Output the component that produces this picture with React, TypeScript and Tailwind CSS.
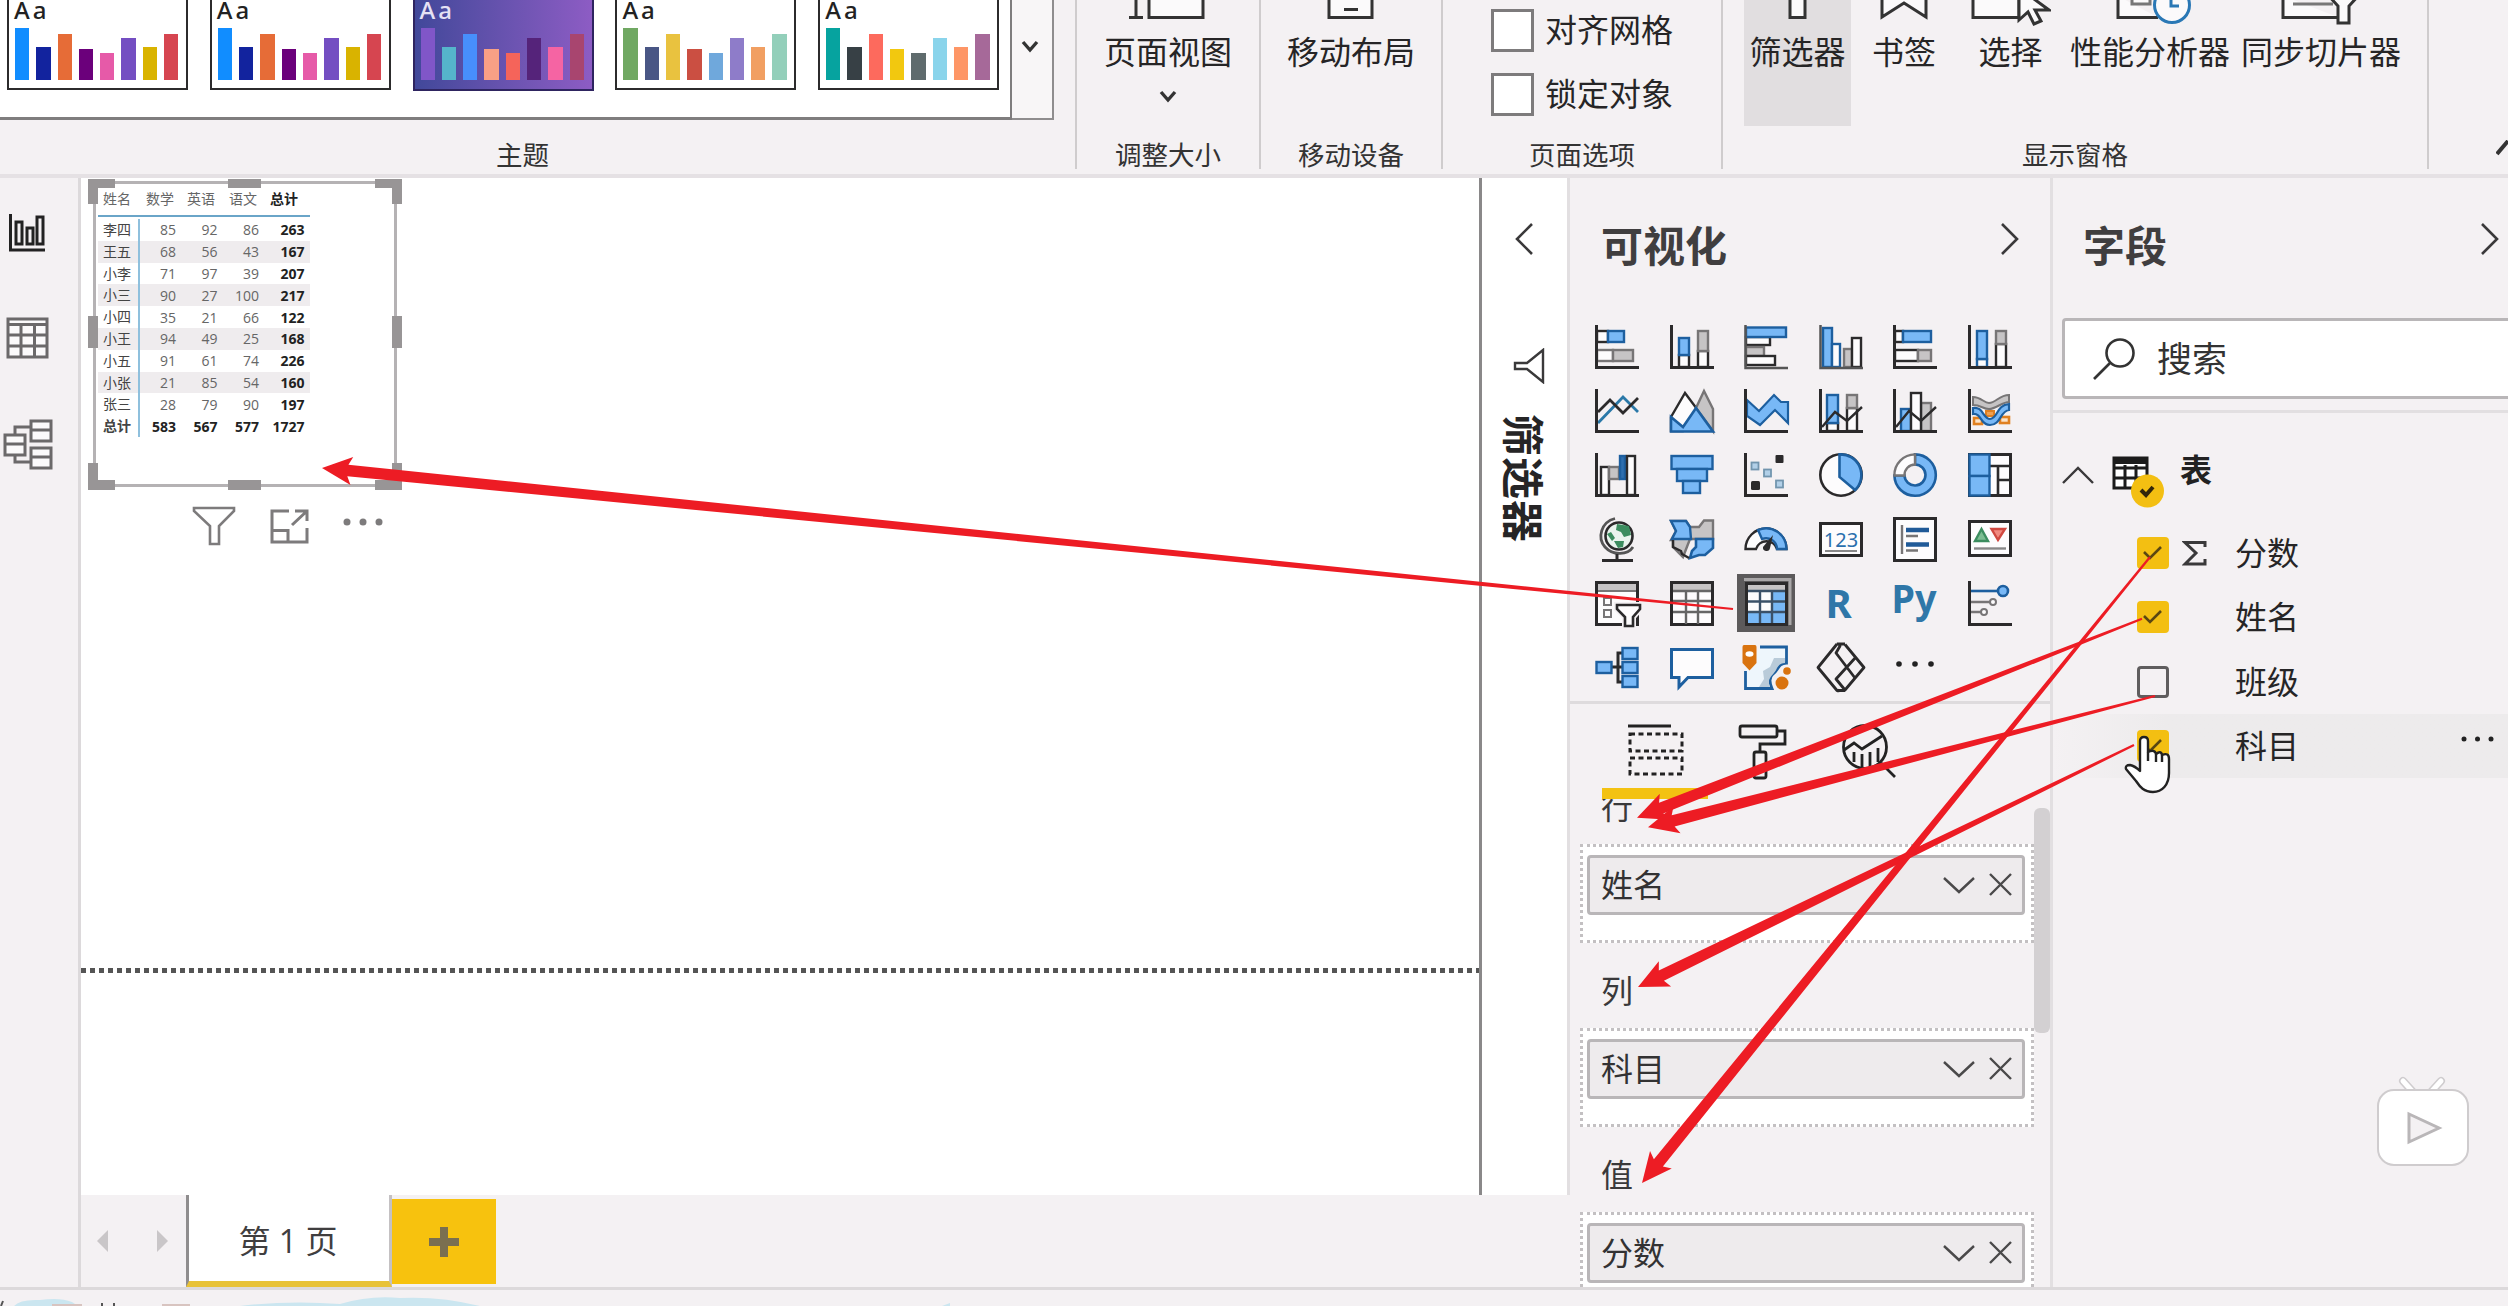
import type { ReactNode } from "react";

const K = "#2b2a2b";
const B = "#78b8f6";
const S = "#1d5f9f";
const G = "#c6c4c5";
const H = "#777576";
const W = "#fdfcfd";

/* ---------- theme gallery ---------- */

const barTops = [28, 47, 34, 49, 53, 38, 47, 34];
const base = ["#118dff", "#12239e", "#e66c37", "#6b007b", "#e65aa8", "#744ec2", "#d9b300", "#d64550"];
const themes = [
  { colors: base, dark: false },
  { colors: base, dark: false },
  { colors: ["#8056c8", "#55b5cb", "#478ffc", "#f8a085", "#f5645a", "#55237a", "#f564a3", "#a8456f"], dark: true },
  { colors: ["#70a862", "#495685", "#e9c23f", "#cb4f42", "#6fa8dc", "#8e7cc9", "#f19f62", "#93cfba"], dark: false },
  { colors: ["#06a39f", "#374045", "#fd6a5d", "#f2c80f", "#5f6b6d", "#8ad4eb", "#fe9666", "#a66999"], dark: false },
];

function Theme({ colors, dark }: { colors: string[]; dark: boolean }) {
  return (
    <div
      className={
        dark
          ? "flex h-[91px] w-[181px] shrink-0 flex-col border-2 border-t-0 border-[#2e2460] bg-gradient-to-r from-[#41489a] to-[#8d5cc4]"
          : "flex h-[90px] w-[181px] shrink-0 flex-col border-2 border-t-0 border-[#2c2b2c] bg-white"
      }
    >
      <div
        className={
          dark
            ? "h-[28px] pl-[5px] font-['Noto_Sans'] text-[24px] leading-[20px] font-medium tracking-[3px] text-[#e6e2f4]"
            : "h-[28px] pl-[5px] font-['Noto_Sans'] text-[24px] leading-[20px] font-medium tracking-[3px] text-[#222]"
        }
      >
        Aa
      </div>
      <div className="flex h-[52px] items-end gap-[7px] pl-[6px]">
        {colors.map((c, i) => (
          <div key={i} className="w-[14.3px]" style={{ height: 80 - barTops[i], background: c }} />
        ))}
      </div>
    </div>
  );
}

/* ---------- ribbon ---------- */

function Group({ width, label, children, className = "" }: { width: string; label: string; children: ReactNode; className?: string }) {
  return (
    <div className={"flex h-[169px] shrink-0 flex-col border-r-2 border-[#cfcccd] " + width}>
      <div className={"flex h-[142px] " + className}>{children}</div>
      <div className="text-center text-[26.5px] leading-[27px] text-[#333]">{label}</div>
    </div>
  );
}

function Tool({ width, label, icon, active = false, arrow = false }: { width: string; label: string; icon: ReactNode; active?: boolean; arrow?: boolean }) {
  return (
    <div className={"flex h-[126px] shrink-0 flex-col items-center " + width + (active ? " bg-[#e1dee0]" : "")}>
      <div className="h-[32px]">{icon}</div>
      <div className="h-[42px] whitespace-nowrap text-[32px] leading-[40px] text-[#262526]">{label}</div>
      {arrow && (
        <svg width="18" height="14" viewBox="0 0 18 14" className="mt-[16px]" fill="none" stroke="#333" strokeWidth="3.4">
          <path d="M2 2l7 8 7-8" />
        </svg>
      )}
    </div>
  );
}

function Check({ label }: { label: string }) {
  return (
    <div className="flex h-[64px] items-center gap-[11px]">
      <div className="h-[43px] w-[43px] border-[3px] border-[#7d7b7c] bg-white" />
      <span className="text-[32px] leading-[40px] text-[#262526]">{label}</span>
    </div>
  );
}

const topIcon = "fill-[#fbfafb] stroke-[#333] [stroke-width:3]";

function Ribbon() {
  return (
    <div className="flex h-[178px] shrink-0 border-b-4 border-[#e5e1e4]">
      <div className="flex h-[169px] w-[1077px] shrink-0 flex-col border-r-2 border-[#cfcccd]">
        <div className="flex h-[142px]">
          <div className="flex h-[120px] w-[1012px] gap-[21.8px] border-r-2 border-b-[3px] border-[#7f7d7e] bg-white pl-[7px]">
            {themes.map((t, i) => (
              <Theme key={i} {...t} />
            ))}
          </div>
          <div className="flex h-[120px] w-[42px] items-center justify-center border-r-2 border-b-2 border-[#8f8d8e] bg-[#f8f6f7] pr-[4px] pb-[24px]">
            <svg width="18" height="14" viewBox="0 0 18 14" fill="none" stroke="#333" strokeWidth="3.4">
              <path d="M2 2l7 8 7-8" />
            </svg>
          </div>
        </div>
        <div className="pr-[30px] text-center text-[26.5px] leading-[27px] text-[#333]">主题</div>
      </div>
      <Group width="w-[184px]" label="调整大小" className="justify-center">
        <Tool
          width="w-[140px]"
          label="页面视图"
          arrow
          icon={
            <svg width="78" height="22" viewBox="0 0 78 22" className={topIcon}>
              <path d="M7-4V17M0 17.5h14M20-4V17.5h54V-4" />
            </svg>
          }
        />
      </Group>
      <Group width="w-[182px]" label="移动设备" className="justify-center">
        <Tool
          width="w-[140px]"
          label="移动布局"
          icon={
            <svg width="48" height="22" viewBox="0 0 48 22" className={topIcon}>
              <path d="M2-4V17.5h43V-4M17 9.500h14" />
            </svg>
          }
        />
      </Group>
      <Group width="w-[280px]" label="页面选项" className="flex-col pl-[48px]">
        <div className="-mt-[2px] flex flex-col">
          <Check label="对齐网格" />
          <Check label="锁定对象" />
        </div>
      </Group>
      <Group width="w-[706px]" label="显示窗格" className="pl-[21px]">
        <Tool
          width="w-[107px]"
          label="筛选器"
          active
          icon={
            <svg width="20" height="22" viewBox="0 0 20 22" className={topIcon}>
              <path d="M2-4V17.500h15V-4" />
            </svg>
          }
        />
        <Tool
          width="w-[106px]"
          label="书签"
          icon={
            <svg width="48" height="22" viewBox="0 0 48 22" className={topIcon}>
              <path d="M2-6V17L24 3l22 14V-6" />
            </svg>
          }
        />
        <Tool
          width="w-[107px]"
          label="选择"
          icon={
            <svg width="80" height="28" viewBox="0 0 80 28" className={topIcon}>
              <path d="M2-4V17.500h46V-4" />
              <path d="M48-12V20l9-8 6 12 7-3-6-11h14z" />
            </svg>
          }
        />
        <Tool
          width="w-[172px]"
          label="性能分析器"
          icon={
            <svg width="76" height="28" viewBox="0 0 76 28" className={"ml-[8px] " + topIcon}>
              <path d="M2-4V17.500h40" />
              <path d="M16-4V4h18V-4" className="stroke-[#777]" />
              <circle cx="56" cy="5" r="17.500" className="stroke-[#2a78b5]" />
              <path d="M55-6V6h8" className="stroke-[#2a78b5]" fill="none" />
            </svg>
          }
        />
        <Tool
          width="w-[170px]"
          label="同步切片器"
          icon={
            <svg width="80" height="28" viewBox="0 0 80 28" className={topIcon}>
              <path d="M2-4V17.500h56" />
              <path d="M12 4h40" className="stroke-[#777]" />
              <path d="M46-6L57 6V23h11V6L79-6z" />
            </svg>
          }
        />
      </Group>
      <div className="flex flex-1 items-end justify-end pb-[18px]">
        <svg width="12" height="16" viewBox="0 0 12 16" fill="none" stroke="#333" strokeWidth="4">
          <path d="M1 14L12 1" />
        </svg>
      </div>
    </div>
  );
}

/* ---------- left rail ---------- */

function Rail() {
  return (
    <div className="flex w-[81px] shrink-0 flex-col border-r-[3px] border-[#dcd9db]">
      <svg width="46" height="40" viewBox="0 0 46 40" className="mt-[35px] ml-[8px]" fill="none" stroke="#222" strokeWidth="3">
        <path d="M2.500 1V37H37" />
        <rect x="8" y="9" width="6" height="22" />
        <rect x="19" y="15" width="6" height="16" />
        <rect x="29" y="4" width="6" height="27" />
      </svg>
      <svg width="44" height="42" viewBox="0 0 44 42" className="mt-[64px] ml-[6px]" fill="#fbfafb" stroke="#6b696a" strokeWidth="3">
        <rect x="2" y="2" width="39" height="38" />
        <path d="M2 7.500H41M2 18H41M2 29H41M15 7.500V40M28.500 7.500V40" />
      </svg>
      <svg width="52" height="52" viewBox="0 0 52 52" className="mt-[60px] ml-[3px]" fill="#fbfafb" stroke="#6b696a" strokeWidth="3">
        <path d="M12 16V8h16M12 36v7h16" fill="none" />
        <rect x="2" y="16" width="20" height="20" />
        <path d="M2 25H22" />
        <rect x="28" y="2" width="20" height="20" />
        <path d="M28 11H48" />
        <rect x="28" y="29" width="20" height="20" />
        <path d="M28 38H48" />
      </svg>
    </div>
  );
}

/* ---------- matrix visual ---------- */

const rows: [string, number, number, number, number][] = [
  ["李四", 85, 92, 86, 263],
  ["王五", 68, 56, 43, 167],
  ["小李", 71, 97, 39, 207],
  ["小三", 90, 27, 100, 217],
  ["小四", 35, 21, 66, 122],
  ["小王", 94, 49, 25, 168],
  ["小五", 91, 61, 74, 226],
  ["小张", 21, 85, 54, 160],
  ["张三", 28, 79, 90, 197],
  ["总计", 583, 567, 577, 1727],
];

function Matrix() {
  return (
    <div className="relative mt-[1px] ml-[7px] h-[312px] w-[314px]">
      <div className="mx-[5px] mt-[2px] h-[306px] border-[3px] border-[#b5b2b4] pt-[1px] pl-[2px] text-[14px] text-[#666]">
        <div className="flex h-[32px] w-[212px] items-center border-b-2 border-[#6aa5c8] pb-[4px] pl-[5px]">
          <span className="w-[43px]">姓名</span>
          <span className="w-[41px]">数学</span>
          <span className="w-[42px]">英语</span>
          <span className="w-[41px]">语文</span>
          <span className="font-bold text-[#222]">总计</span>
        </div>
        <div className="pt-[2px]">
          {rows.map((r, i) => {
            const total = i === rows.length - 1;
            return (
              <div key={r[0]} className={"flex h-[21.8px] w-[212px] items-center leading-[21px] " + (i % 2 && !total ? "bg-[#efecee] " : "") + (total ? "font-bold text-[#222]" : "")}>
                <span className="h-full w-[42px] border-r-2 border-[#8fc0dd] pl-[5px] text-[#444]">{r[0]}</span>
                <span className="w-[36px] text-right">{r[1]}</span>
                <span className="w-[41.500px] text-right">{r[2]}</span>
                <span className="w-[41.500px] text-right">{r[3]}</span>
                <span className="w-[45.500px] text-right font-bold text-[#222]">{r[4]}</span>
              </div>
            );
          })}
        </div>
      </div>
      <svg width="314" height="312" viewBox="0 0 314 312" className="absolute top-0 left-0" fill="#989596">
        <path d="M0 0H27V9H10V25H0zM287 0H314V25H304V9H287zM0 311V284H10V301H27V311zM287 311V301H304V284H314V311zM140 0h33v9h-33zM140 301h33v10h-33zM0 137h10v32H0zM304 137h10v32h-10z" />
      </svg>
    </div>
  );
}

function Canvas() {
  return (
    <div className="flex h-[1017px] flex-col bg-white">
      <Matrix />
      <div className="mt-[15px] ml-[111px] flex h-[46px] items-start">
        <svg width="44" height="42" viewBox="0 0 44 42" fill="none" stroke="#7d7b7c" strokeWidth="2.600">
          <path d="M2 2H42V5L27 20V38H18V20L2 5z" />
        </svg>
        <svg width="40" height="36" viewBox="0 0 40 36" className="mt-[3px] ml-[33px]" fill="none" stroke="#7d7b7c" strokeWidth="3">
          <path d="M20 2H3V33H38V19M3 21.500H19V33M23 16L38 2M26 2H38V12" />
        </svg>
        <svg width="44" height="12" viewBox="0 0 44 12" className="mt-[10px] ml-[32px]" fill="#7d7b7c">
          <circle cx="6" cy="6" r="3.500" />
          <circle cx="22" cy="6" r="3.500" />
          <circle cx="38" cy="6" r="3.500" />
        </svg>
      </div>
      <div className="mt-[416px] h-[5px] w-full bg-[repeating-linear-gradient(90deg,#555_0,#555_5px,transparent_5px,transparent_9px)]" />
    </div>
  );
}

function PageTabs() {
  return (
    <div className="flex h-[92px]">
      <div className="flex w-[105px] items-center justify-between pr-[18px] pl-[16px]">
        <svg width="11" height="22" viewBox="0 0 11 22" fill="#c9c6c8"><path d="M11 0V22L0 11z" /></svg>
        <svg width="11" height="22" viewBox="0 0 11 22" fill="#c9c6c8"><path d="M0 0V22L11 11z" /></svg>
      </div>
      <div className="flex w-[206px] items-center justify-center border-r-[3px] border-b-[6px] border-l-[3px] border-r-[#c4c1c3] border-b-[#e8c238] border-l-[#8f8d8e] bg-white pt-[6px] pr-[2px] text-[32px] text-[#403e3f]">
        第 1 页
      </div>
      <div className="mt-[4px] flex h-[85px] w-[104px] items-center justify-center bg-[#f7c20e]">
        <svg width="30" height="30" viewBox="0 0 30 30" fill="none" stroke="#7a6f50" strokeWidth="8"><path d="M15 0V30M0 15H30" /></svg>
      </div>
    </div>
  );
}

/* ---------- panes ---------- */

function Chevron({ left = false, className = "" }: { left?: boolean; className?: string }) {
  return (
    <svg width="20" height="32" viewBox="0 0 20 32" className={className} fill="none" stroke="#3a393a" strokeWidth="2.600">
      <path d={left ? "M18 1L3 16L18 31" : "M2 1L17 16L2 31"} />
    </svg>
  );
}

function FilterPane() {
  return (
    <div className="flex h-[1017px] w-[91px] shrink-0 flex-col items-center border-r-[3px] border-l-[3px] border-r-[#e2dfe1] border-l-[#8a8889] bg-white pr-[2px]">
      <Chevron left className="mt-[45px]" />
      <svg width="32" height="36" viewBox="0 0 32 36" className="mt-[93px] ml-[10px]" fill="none" stroke="#3a393a" strokeWidth="2.400">
        <path d="M30 2V34L14 21H2V15H14z" />
      </svg>
      <div className="mt-[30px] mr-[2px] text-[42px] leading-[44px] font-bold tracking-[1px] text-[#262526] [text-orientation:sideways] [writing-mode:vertical-rl]">筛选器</div>
    </div>
  );
}

function Axis() {
  return <path d="M1.500 0V42.500H44" fill="none" stroke={K} strokeWidth="3" />;
}

function R(p: { x: number; y: number; w: number; h: number; f: string; s?: string }) {
  return <rect x={p.x} y={p.y} width={p.w} height={p.h} fill={p.f} stroke={p.s ?? (p.f === B ? S : p.f === G ? H : K)} strokeWidth="2.400" />;
}

const icons: ReactNode[] = [
  <><R x={2} y={6} w={11} h={11} f={W} /><R x={13} y={6} w={16} h={11} f={B} /><R x={2} y={25} w={16} h={11} f={W} s={H} /><R x={18} y={25} w={20} h={11} f={G} /><Axis /></>,
  <><R x={9} y={30} w={10} h={12} f={W} /><R x={9} y={13} w={10} h={17} f={B} /><R x={28} y={26} w={10} h={16} f={W} /><R x={28} y={6} w={10} h={20} f={G} /><Axis /></>,
  <><R x={2} y={12} w={24} h={8} f={W} /><R x={2} y={22} w={18} h={9} f={G} /><R x={2} y={31} w={29} h={9} f={W} /><R x={2} y={2.500} w={40} h={9.500} f={B} /><path d="M1.500 0V43H44" fill="none" stroke="#555" strokeWidth="2.500" /></>,
  <><R x={4} y={3} w={9} h={39} f={B} /><R x={13} y={19} w={8} h={23} f={W} s={S} /><R x={25} y={24} w={8} h={18} f={G} /><R x={33} y={13} w={9} h={29} f={W} /><path d="M1.500 0V43H44" fill="none" stroke="#555" strokeWidth="2.500" /></>,
  <><R x={2} y={6} w={8} h={11} f={W} /><R x={10} y={6} w={28} h={11} f={B} /><R x={2} y={25} w={23} h={11} f={W} /><R x={25} y={25} w={13} h={11} f={G} /><Axis /></>,
  <><R x={9} y={34} w={10} h={8} f={W} s={S} /><R x={9} y={6} w={10} h={28} f={B} /><R x={28} y={19} w={10} h={23} f={W} /><R x={28} y={6} w={10} h={13} f={G} /><Axis /></>,
  <><path d="M3 34L28 8L43 23" fill="none" stroke="#2a78a8" strokeWidth="2.800" /><path d="M3 23L15 11L28 24L43 9" fill="none" stroke={K} strokeWidth="2.800" /><Axis /></>,
  <><path d="M1 28L15 4L27 20L13 42H1z" fill={W} stroke={K} strokeWidth="2.400" /><path d="M26 19L34 2L43 20V42z" fill={G} stroke={H} strokeWidth="2.400" /><path d="M1 42.500V28L13 38L26 19L43 42.500z" fill={B} stroke={S} strokeWidth="2.600" /></>,
  <><path d="M3 11L15 22L30 6L37 13H44V34L31 21L16 36L3 27z" fill={B} stroke={S} strokeWidth="2.200" /><Axis /></>,
  <><R x={8} y={34} w={11} h={8} f={W} /><R x={8} y={6} w={11} h={28} f={B} /><R x={28} y={19} w={10} h={23} f={W} /><R x={28} y={6} w={10} h={13} f={G} /><path d="M3 38L16 23L28 32L43 18" fill="none" stroke={K} strokeWidth="2.400" /><Axis /></>,
  <><R x={8} y={20} w={10} h={22} f={B} /><R x={28} y={14} w={10} h={28} f={G} /><R x={18} y={4} w={10} h={38} f={W} /><path d="M3 38L16 22L28 32L43 18" fill="none" stroke={K} strokeWidth="2.400" /><Axis /></>,
  <><rect x="6" y="29" width="8" height="6" fill="#fbe3c8" stroke="#e08020" strokeWidth="2.600" /><rect x="32" y="28" width="9" height="6" fill="#fbe3c8" stroke="#e08020" strokeWidth="2.600" /><rect x="18" y="22" width="8" height="5" fill="#f0a050" stroke="#e08020" strokeWidth="2" /><path d="M5 8C13 8 16 14 21 14C28 14 31 6 41 6V13C34 13 28 20 21 20C15 20 13 16 5 16z" fill={G} stroke={H} strokeWidth="2" /><path d="M5 19C15 17 15 30 22 30C30 30 28 16 41 15V21C32 22 33 36 22 36C12 36 14 24 5 25z" fill={B} stroke={S} strokeWidth="2.200" /><Axis /></>,
  <><R x={6} y={14} w={8} h={28} f={W} /><R x={14} y={14} w={10} h={12} f={G} /><R x={25} y={3} w={5} h={23} f="#2f6fae" s={S} /><R x={32} y={3} w={8} h={39} f={W} /><Axis /></>,
  <><R x={1.500} y={3} w={41} h={13} f={B} /><R x={7} y={16} w={30} h={12} f={B} /><R x={13} y={28} w={17} h={12} f={B} /></>,
  <><rect x="7.500" y="9.500" width="7" height="7" fill="#b2d0e8" stroke="#7295ae" strokeWidth="1.800" /><rect x="20" y="16.500" width="7" height="7" fill="#b2d0e8" stroke="#7295ae" strokeWidth="1.800" /><rect x="32" y="27.500" width="7" height="7" fill="#b2d0e8" stroke="#7295ae" strokeWidth="1.800" /><rect x="31.500" y="2" width="8" height="8" rx="1" fill={K} /><rect x="7" y="28" width="9" height="9" rx="1.500" fill={K} /><Axis /></>,
  <><circle cx="22" cy="22" r="20.700" fill={W} stroke={K} strokeWidth="2.600" /><path d="M20.500 1.400A20.700 20.700 0 0 1 36 37L20.500 24z" fill={B} stroke={S} strokeWidth="2.600" /></>,
  <><path d="M22 1.400A20.700 20.700 0 1 1 1.400 22.500H11.500A10.500 10.500 0 1 0 22 11.500z" fill={B} stroke={S} strokeWidth="2.600" /><path d="M22 1.400A20.700 20.700 0 0 0 1.400 22.500H11.500A10.500 10.500 0 0 1 22 11.500z" fill={W} stroke={H} strokeWidth="2.400" /></>,
  <><rect x="1.500" y="1.500" width="41" height="41" fill={W} stroke={K} strokeWidth="3" /><path d="M21 13H43M30 13V43M30 27H43" fill="none" stroke={K} strokeWidth="2.600" /><R x={1.500} y={1.500} w={20} h={21.500} f={B} /><R x={1.500} y={23} w={20} h={19.500} f={B} /></>,
  <><circle cx="24" cy="19" r="13.500" fill="#eaf4ee" stroke={K} strokeWidth="2.600" /><path d="M22 7L34 9L36 18L29 20L26 15L21 13zM12 17L16 15L20 21L17 24zM19 24L29 24L28 30L23 31z" fill="#3c8d5f" /><path d="M20 1.500C6 5 2 21 10 30C18 39 33 38 38 30" fill="none" stroke="#555" strokeWidth="2.800" /><path d="M22 37V42M7 43.500H38" stroke={K} strokeWidth="3" /></>,
  <><path d="M1 4H16L20 10H29L34 3.500H43V22H20L13 40L3 30V23H1L6 14z" fill={G} stroke={H} strokeWidth="2.400" /><path d="M1 4H16L20 10L21 22H2L6 14z" fill={B} stroke={S} strokeWidth="2.400" /><path d="M26 22H43V31L35 38H29L20 41L22 34L26 30z" fill={B} stroke={S} strokeWidth="2.600" /><path d="M3 23V30L11 34L12 37L19 41" fill="none" stroke={K} strokeWidth="2.400" /></>,
  <><path d="M1.500 32A20.500 20.500 0 0 1 42.500 32H33A11 11 0 0 0 12 32z" fill={W} stroke={K} strokeWidth="2.400" /><path d="M14 13A20.500 20.500 0 0 1 42.500 32H33A11 11 0 0 0 18 22z" fill={B} stroke={S} strokeWidth="2.400" /><path d="M19 30L29 18L26 31A3.500 3.500 0 0 1 19 30z" fill={K} /></>,
  <><rect x="1.500" y="6.500" width="41" height="32" fill={W} stroke={K} strokeWidth="3" /><text x="22" y="29.500" textAnchor="middle" fontSize="20" fontFamily="Noto Sans" fill="#2a6fad">123</text><path d="M6 34H38" stroke="#888" strokeWidth="2" /></>,
  <><rect x="1.500" y="1.500" width="41" height="42" fill={W} stroke={K} strokeWidth="3" /><path d="M9 8V37" stroke={H} strokeWidth="2.400" /><path d="M13 13H36M13 27.500H36" stroke="#205a98" strokeWidth="4.600" /><path d="M13 19H25M13 33.500H25" stroke={H} strokeWidth="2.400" /></>,
  <><rect x="1.500" y="4.500" width="41" height="34" fill={W} stroke={K} strokeWidth="3" /><path d="M13.500 12L20 24H7z" fill="#7cbd92" stroke="#3c8d5f" strokeWidth="2.400" /><path d="M30 23L23.500 12H37z" fill="#f08a80" stroke="#d04840" strokeWidth="2.400" /><path d="M6 31.500H38" stroke="#888" strokeWidth="2.400" /></>,
  <><rect x="1.500" y="1.500" width="41" height="42" fill={W} stroke={K} strokeWidth="3" /><rect x="3" y="3" width="38" height="6" fill={G} /><path d="M3 10H41" stroke={H} strokeWidth="2" /><rect x="9" y="17" width="7" height="7" fill="none" stroke={H} strokeWidth="2" /><rect x="9" y="29" width="7" height="7" fill="none" stroke={H} strokeWidth="2" /><path d="M22 24H45V28L38 36V45H30V36L22 28z" fill={W} stroke="#f4f1f3" strokeWidth="6" /><path d="M22 24H45V28L38 36V45H30V36L22 28z" fill={W} stroke={K} strokeWidth="2.600" /></>,
  <><rect x="1.500" y="1.500" width="41" height="42" fill={W} stroke={K} strokeWidth="3" /><rect x="3" y="3" width="38" height="6" fill={G} /><path d="M3 10H41M3 20H41M3 31H41M16 10V43M28 10V43" stroke="#666" strokeWidth="2.400" /></>,
  <><rect x="-7" y="-7" width="58" height="58" fill="#5c5a5b" /><path d="M0-1.500H46V44" fill="none" stroke="#a9a7a8" strokeWidth="3" /><rect x="2.500" y="2.500" width="40" height="41" fill={W} stroke={K} strokeWidth="3" /><rect x="4" y="4" width="37" height="5" fill={G} /><path d="M28 10H41V42H4V31H28z" fill={B} /><path d="M4 10H41M4 20.500H41M4 31H41M16 10V42M28 10V42" stroke="#3b5168" strokeWidth="2.400" /></>,
  <text x="19.500" y="37" textAnchor="middle" fontSize="40" fontWeight="700" fontFamily="Noto Sans" fill="#2f77a8">R</text>,
  <text x="21" y="32" textAnchor="middle" fontSize="39" fontWeight="700" fontFamily="Noto Sans" fill="#2f77a8" textLength="45" lengthAdjust="spacingAndGlyphs">Py</text>,
  <><path d="M3 10H30" stroke={S} strokeWidth="2.600" /><path d="M3 21H22M3 31H13" stroke={H} strokeWidth="2.400" /><circle cx="35" cy="10" r="5" fill={B} stroke={S} strokeWidth="2.600" /><circle cx="25" cy="21" r="3" fill={W} stroke={H} strokeWidth="2" /><circle cx="16" cy="31" r="3" fill={W} stroke={H} strokeWidth="2" /><path d="M1.500 0V43.500H44" fill="none" stroke={K} strokeWidth="3" /></>,
  <><path d="M16 22H28M28 8H23V37H28" fill="none" stroke={K} strokeWidth="3" /><R x={1.500} y={17} w={15} h={11} f={B} /><R x={27.500} y={3} w={15} h={11} f={B} /><R x={27.500} y={17} w={15} h={11} f={B} /><R x={27.500} y={31} w={15} h={11} f={B} /></>,
  <path d="M1.500 4.500H42.500V32.500H18L9 42V32.500H1.500z" fill={W} stroke={S} strokeWidth="3" />,
  <><path d="M16 2H42.500V18C34 18 34 26 29 29C24 33 26 39 28 43.500H1.500V26" fill="#eef6fc" stroke={S} strokeWidth="2.800" /><path d="M41 13H30L26 22L19 26L20 34L15 42H26C22 32 30 31 33 23C35 19 38 18 41 18z" fill="#b9cbd9" /><path d="M-1.500 2Q-1.500 0 0 0H11Q12.500 0 12.500 2V18L5.500 25.500L-1.500 18z" fill="#d9730f" /><ellipse cx="5.500" cy="9" rx="4" ry="2.800" fill="#fff" /><circle cx="38" cy="38" r="6.500" fill="#d9730f" /><circle cx="43" cy="26" r="3.800" fill="#d9730f" /></>,
  <><path d="M18-1L-1 22.500L18 45.500Q20 46.500 21 44.500M18-1Q20-1.500 21 1L17 8L36 33M26-0.500L45 22.500L26 45L17 34L37 12M18-1H26M18 45.500H26" fill="none" stroke={K} strokeWidth="2.800" strokeLinejoin="round" /></>,
  <><circle cx="6" cy="19" r="2.800" fill="#222" /><circle cx="22" cy="19" r="2.800" fill="#222" /><circle cx="38" cy="19" r="2.800" fill="#222" /></>,
];

function Well({ title, field }: { title: string; field: string }) {
  return (
    <div className="flex h-[184px] shrink-0 flex-col">
      <div className="h-[55px] pl-[31px] text-[32px] leading-[36px] text-[#3a393a]">{title}</div>
      <div className="ml-[10px] h-[99px] w-[454px] border-[3px] border-dotted border-[#c3c0c2] bg-white pt-[8px] pl-[4px]">
        <div className="flex h-[60px] w-[438px] items-center rounded-[4px] border-[3px] border-[#b9b6b8] bg-[#eeebed] pl-[11px]">
          <span className="flex-1 text-[32px] text-[#333233]">{field}</span>
          <svg width="34" height="20" viewBox="0 0 34 20" fill="none" stroke="#4a494a" strokeWidth="2.400"><path d="M2 3L17 17L32 3" /></svg>
          <svg width="24" height="24" viewBox="0 0 24 24" className="mr-[9px] ml-[13px]" fill="none" stroke="#4a494a" strokeWidth="2.400"><path d="M1 1L22 22M22 1L1 22" /></svg>
        </div>
      </div>
    </div>
  );
}

function VisualPane() {
  return (
    <div className="flex w-[483px] shrink-0 flex-col border-r-[3px] border-[#e2dfe1]">
      <div className="flex h-[147px] items-start justify-between pt-[38px] pr-[30px] pl-[31px]">
        <span className="text-[42px] leading-[60px] font-bold text-[#403e3f]">可视化</span>
        <Chevron className="mt-[7px]" />
      </div>
      <div className="grid w-[448px] grid-cols-6 pl-[25px] [grid-auto-rows:64px]">
        {icons.map((ic, i) => (
          <svg key={i} width="44" height="44" viewBox="0 0 44 44" className="overflow-visible" style={{ marginLeft: (i % 6) * 4.1 }}>
            {ic}
          </svg>
        ))}
      </div>
      <div className="-mt-[8px] h-[87px] shrink-0 border-t-[3px] border-[#dedbdd]">
        <div className="flex pt-[20px] pl-[58px]">
          <svg width="56" height="54" viewBox="0 0 56 54" fill="none" stroke="#222" strokeWidth="3">
            <path d="M0 2H43" />
            <path d="M2 10H54V27H2zM2 34H54V50H2z" strokeDasharray="5 3.500" />
          </svg>
          <svg width="50" height="56" viewBox="0 0 50 56" className="ml-[54px]" fill="none" stroke="#222" strokeWidth="2.800">
            <rect x="2" y="2" width="37" height="11" rx="2" />
            <path d="M39 7H47V20H22V28" />
            <rect x="16" y="28" width="12" height="26" rx="2" />
          </svg>
          <svg width="56" height="56" viewBox="0 0 56 56" className="ml-[54px]" fill="none" stroke="#222" strokeWidth="2.800">
            <circle cx="23" cy="23" r="21.500" />
            <path d="M2 26L12 19L20 25L40 12M12 28V38M20 30V43M28 28V43M36 24V38M39 39L53 53" />
          </svg>
        </div>
      </div>
      <div className="h-[11px] shrink-0">
        <div className="ml-[32px] h-[11px] w-[106px] bg-[#f3c212]" />
      </div>
      <div className="flex h-[488px] overflow-hidden">
        <div className="-mt-[10px] flex flex-1 flex-col">
          <Well title="行" field="姓名" />
          <Well title="列" field="科目" />
          <Well title="值" field="分数" />
        </div>
        <div className="mt-[9px] -ml-[18px] h-[225px] w-[16px] rounded-[6px] bg-[#d3d0d2]" />
      </div>
    </div>
  );
}

/* ---------- field list ---------- */

function Field({ name, checked = true, sigma = false, hover = false }: { name: string; checked?: boolean; sigma?: boolean; hover?: boolean }) {
  return (
    <div className={"flex h-[64.300px] items-center pl-[84px] " + (hover ? "bg-gradient-to-r from-[#f4f1f3] via-[#edebec] via-25% to-[#edebec]" : "")}>
      {checked ? (
        <div className="flex h-[32px] w-[32px] items-center justify-center rounded-[4px] bg-[#f3bf12]">
          <svg width="20" height="14" viewBox="0 0 20 14" fill="none" stroke="#5a4712" strokeWidth="2.600"><path d="M1 6L7 12L18 1" /></svg>
        </div>
      ) : (
        <div className="h-[32px] w-[32px] rounded-[4px] border-[3px] border-[#5f5d5e]" />
      )}
      <div className="flex h-full w-[66px] items-center pl-[13px]">
        {sigma && (
          <svg width="25" height="27" viewBox="0 0 25 27" fill="none" stroke="#3a393a" strokeWidth="3"><path d="M23 7V2.500H3L14 13L3 24H23V19" /></svg>
        )}
      </div>
      <span className="flex-1 text-[32px] text-[#262526]">{name}</span>
      {hover && (
        <svg width="36" height="8" viewBox="0 0 36 8" className="mr-[12px] -mt-[14px]" fill="#222"><circle cx="4" cy="4" r="2.500" /><circle cx="17.500" cy="4" r="2.500" /><circle cx="31" cy="4" r="2.500" /></svg>
      )}
    </div>
  );
}

function FieldPane() {
  return (
    <div className="flex min-w-0 flex-1 flex-col">
      <div className="flex h-[140px] items-start justify-between pt-[38px] pr-[8px] pl-[30px]">
        <span className="text-[42px] leading-[60px] font-bold text-[#403e3f]">字段</span>
        <Chevron className="mt-[7px]" />
      </div>
      <div className="-mr-[6px] ml-[9px] flex h-[81px] shrink-0 items-center rounded-[4px] border-[3px] border-[#b9b6b8] bg-white pl-[28px]">
        <svg width="44" height="44" viewBox="0 0 44 44" fill="none" stroke="#333" strokeWidth="2.600"><circle cx="27" cy="16" r="13.500" /><path d="M17 26L1 42" /></svg>
        <span className="ml-[20px] text-[35px] leading-[44px] text-[#333]">搜索</span>
      </div>
      <div className="mt-[11px] flex h-[111px] shrink-0 items-start border-t-[3px] border-[#e2dfe1] pl-[8px]">
        <svg width="34" height="20" viewBox="0 0 34 20" className="mt-[52px]" fill="none" stroke="#3a393a" strokeWidth="2.400"><path d="M2 18L17 3L32 18" /></svg>
        <svg width="54" height="54" viewBox="0 0 54 54" className="mt-[43px] ml-[17px]" fill="none">
          <path d="M2 2H35V32H2zM2 12H35M2 22H35M13 9V32M24 9V32" fill="#fff" stroke="#1b1b1b" strokeWidth="3" />
          <path d="M1 1H36V8H1z" fill="#1b1b1b" />
          <circle cx="35.500" cy="35" r="16.500" fill="#f3bf12" />
          <path d="M29 34L34 39L41 31" stroke="#33270a" strokeWidth="4" />
        </svg>
        <span className="mt-[37px] ml-[14px] text-[32px] leading-[40px] font-bold text-[#222]">表</span>
      </div>
      <Field name="分数" sigma />
      <Field name="姓名" />
      <Field name="班级" checked={false} />
      <Field name="科目" hover />
    </div>
  );
}

/* ---------- annotations ---------- */

const arrows: [number, number, number, number][] = [
  [1733, 609, 322, 468],
  [2142, 618.7, 1637, 817.7],
  [2155, 696, 1648, 827.3],
  [2134, 745, 1638, 987],
  [2150, 557, 1642, 1183],
];

function Arrows() {
  return (
    <svg width="2508" height="1306" viewBox="0 0 2508 1306" className="pointer-events-none absolute top-0 left-0" fill="#ed1c24">
      {arrows.map(([x1, y1, x2, y2], i) => {
        const len = Math.hypot(x2 - x1, y2 - y1);
        const ux = (x2 - x1) / len;
        const uy = (y2 - y1) / len;
        const at = (back: number, side: number) => `${x2 - ux * back - uy * side},${y2 - uy * back + ux * side}`;
        const pts = [at(0, 0), at(30, 14), at(26, 5.8), at(len, 1.1), at(len, -1.1), at(26, -5.8), at(30, -14)];
        return <polygon key={i} points={pts.join(" ")} />;
      })}
    </svg>
  );
}

export default function App() {
  return (
    <div className="relative flex h-[1306px] w-[2508px] flex-col overflow-hidden bg-[#f4f1f3] font-['Open_Sans','Noto_Sans_CJK_SC',sans-serif]">
      <Ribbon />
      <div className="flex h-[1109px] shrink-0">
        <Rail />
        <div className="flex w-[1398px] shrink-0 flex-col">
          <Canvas />
          <PageTabs />
        </div>
        <FilterPane />
        <VisualPane />
        <FieldPane />
      </div>
      <div className="h-[19px] shrink-0 overflow-hidden border-t-[3px] border-[#dcd9db]">
        <svg width="960" height="16" viewBox="0 0 960 16">
          <path d="M14 16Q20 9 40 10Q60 7 72 12L78 16zM240 16Q290 10 340 14Q370 5 400 8Q440 6 480 16z" fill="#cbe6f0" />
          <path d="M942 16L950 13V16z" fill="#cbe6f0" />
          <path d="M3 11L1 16M102 13V16M114 13V16" stroke="#555" strokeWidth="2" />
          <path d="M52 15H82M162 15H190" stroke="#d8c4c0" strokeWidth="2" />
        </svg>
      </div>
      <svg width="48" height="60" viewBox="0 0 48 60" className="absolute top-[735px] left-[2124px]" fill="#fff" stroke="#222" strokeWidth="2.400" strokeLinejoin="round">
        <path d="M16 6Q16 2 20 2Q24 2 24 6V17Q31 14 32 19Q37 15 38 20Q45 17 45 24V38C45 50 38 57 29 57C20 57 16 52 12 46L2 34Q1 30 6 30Q11 31 16 36z" />
        <path d="M24 17V26M32 19V27M38 20V27" />
      </svg>
      <svg width="96" height="92" viewBox="0 0 96 92" className="absolute top-[1076px] left-[2375px]" fill="#fff" stroke="#cfccce" strokeWidth="2">
        <path d="M28 5L38 16M66 5L56 16" stroke="#cfccce" strokeWidth="8" strokeLinecap="round" />
        <path d="M28 5L38 16M66 5L56 16" stroke="#fff" strokeWidth="5" strokeLinecap="round" />
        <rect x="3" y="14" width="90" height="75" rx="16" />
        <path d="M34 38L64 52L34 66z" fill="#f4f1f3" stroke="#b9b6b8" strokeWidth="3" />
      </svg>
      <Arrows />
    </div>
  );
}
